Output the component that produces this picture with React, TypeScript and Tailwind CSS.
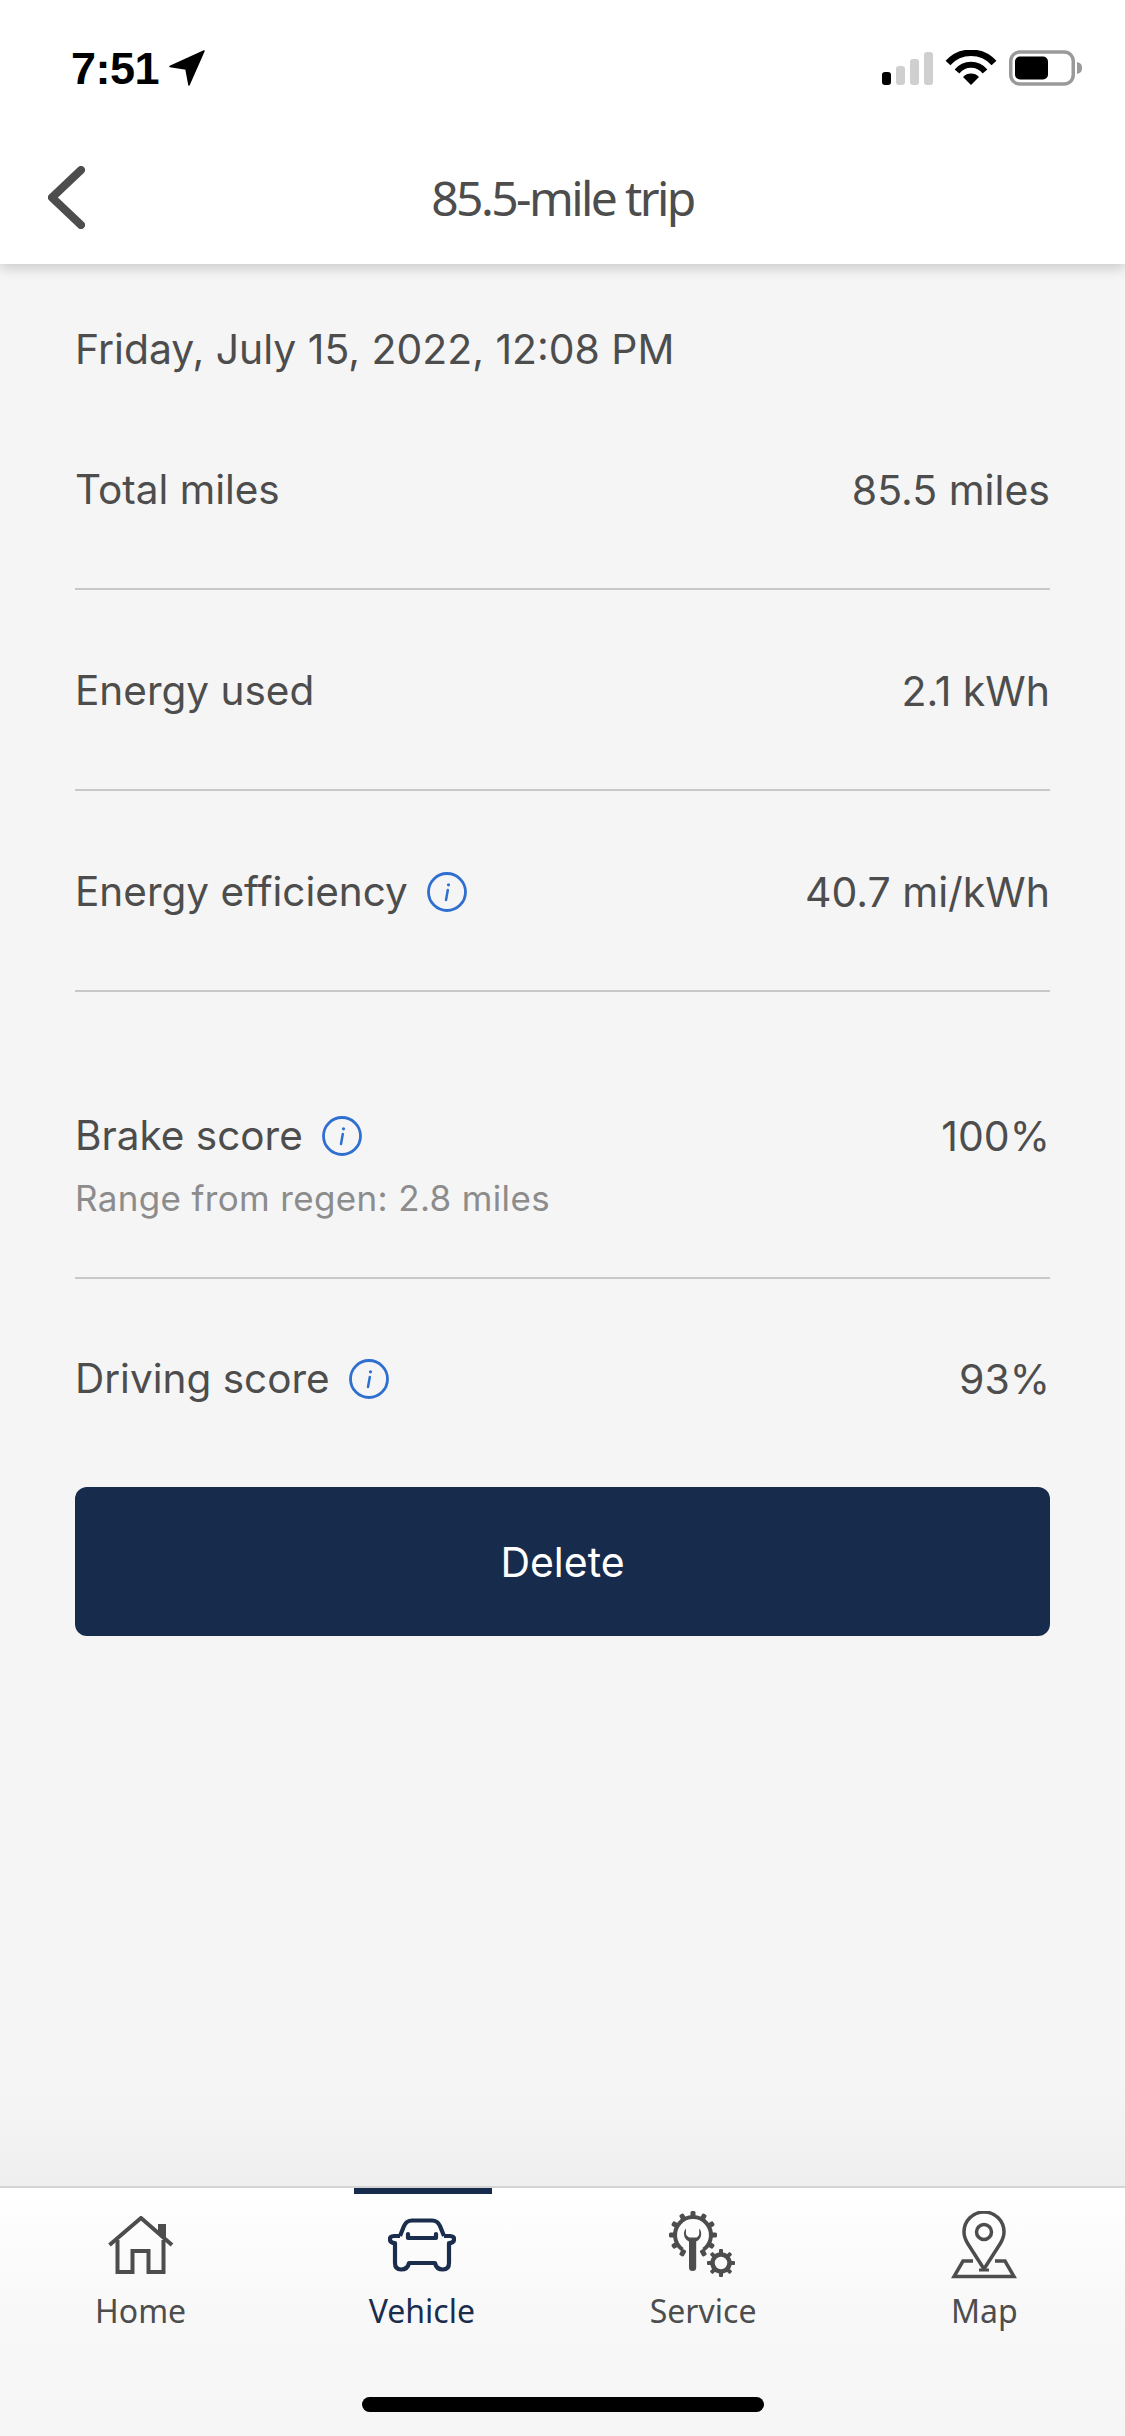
const sans = "font-['Inter','Liberation_Sans',sans-serif]";

function StatusIcons() {
  return (
    <svg width="202" height="36" viewBox="0 0 202 36" className="block">
      <rect x="0" y="22" width="9" height="13" rx="3" fill="#000" />
      <rect x="14" y="16" width="9" height="19" rx="3" fill="#cfcfcf" />
      <rect x="28" y="9" width="9" height="26" rx="3" fill="#cfcfcf" />
      <rect x="42" y="2" width="9" height="33" rx="3" fill="#cfcfcf" />
      <path d="M66 13a31 31 0 0 1 46 0" fill="none" stroke="#000" strokeWidth="6.5" />
      <path d="M75 21.500a18 18 0 0 1 28 0" fill="none" stroke="#000" strokeWidth="6" />
      <path d="M81 27a11 11 0 0 1 16 0l-8 8z" fill="#000" />
      <rect x="128.750" y="2" width="62.500" height="32" rx="9" fill="none" stroke="#9a9a9a" strokeWidth="3.500" />
      <rect x="133" y="6.500" width="33" height="23" rx="5" fill="#000" />
      <path d="M195 12c4 1 5 3 5 6s-1 5-5 6z" fill="#9a9a9a" />
    </svg>
  );
}

function InfoIcon() {
  return (
    <svg width="40" height="40" viewBox="0 0 40 40" className="block shrink-0">
      <circle cx="20" cy="20" r="18.500" fill="none" stroke="#2f6fd0" strokeWidth="2.800" />
      <path d="M20.800 18 19 28" fill="none" stroke="#2f6fd0" strokeWidth="2.500" strokeLinecap="round" />
      <circle cx="21.500" cy="12.800" r="1.600" fill="#2f6fd0" />
    </svg>
  );
}

function HomeIcon() {
  return (
    <svg width="66" height="58" viewBox="0 0 66 58" className="block">
      <path d="M1.500 29 33 2l31 27" fill="none" stroke="#4d4d4d" strokeWidth="4" />
      <path d="M50 8h8v15l-8-7z" fill="#4d4d4d" />
      <path d="M9.500 24v32h15V35h16v21h15V24" fill="none" stroke="#4d4d4d" strokeWidth="4" />
    </svg>
  );
}

function CarIcon() {
  return (
    <svg width="68" height="54" viewBox="0 0 68 54" className="block">
      <path
        d="M12 18 16 8c1.500-3.500 4-5.500 8-5.500h20c4 0 6.500 2 8 5.500l4 10M12 18H6c-3 0-4.500 1.500-4 4 .5 2.500 2 3 5 3v20c0 4 2 6.500 6 6.500s7-1.500 8-6.500h26c1 5 4 6.500 8 6.500s6-2.500 6-6.500V25c3 0 4.500-.5 5-3 .5-2.500-1-4-4-4h-6"
        fill="none"
        stroke="#1a2d4d"
        strokeWidth="4.200"
        strokeLinejoin="round"
      />
      <path d="M20 20h28M20 20v-4M48 20v-4" fill="none" stroke="#1a2d4d" strokeWidth="4.200" strokeLinecap="round" />
    </svg>
  );
}

function ServiceIcon() {
  const big = [-150, -120, -90, -60, -30, 0, 30, 60, 90, 120, 150];
  const small = [0, 45, 90, 135, 180, 225, 270, 315];
  return (
    <svg width="68" height="68" viewBox="0 0 68 68" className="block">
      <path d="M13.500 38.700A18 18 0 1 1 34.500 38.700" fill="none" stroke="#4d4d4d" strokeWidth="4" />
      {big.map((a) => (
        <rect key={a} x="21.500" y="0" width="5" height="7" rx="1.500" fill="#4d4d4d" transform={`rotate(${a} 24 24)`} />
      ))}
      <path
        d="M17 17.500C15.500 19 15 21 15 23c0 3.500 2 6 5 7.500V56.500a3.600 3.600 0 0 0 7.200 0V30.500c3-1.500 5-4 5-7.500 0-2-.5-4-2-5.500v5.500c0 1.500-2 3.500-3 3.500h-6.400c-1 0-3.800-2-3.800-3.500z"
        fill="#4d4d4d"
      />
      <circle cx="52" cy="52" r="8.500" fill="none" stroke="#4d4d4d" strokeWidth="4.500" />
      {small.map((a) => (
        <rect key={a} x="50" y="38" width="4" height="6" rx="1" fill="#4d4d4d" transform={`rotate(${a} 52 52)`} />
      ))}
    </svg>
  );
}

function MapIcon() {
  return (
    <svg width="66" height="68" viewBox="0 0 66 68" className="block">
      <path
        d="M33 58 17 33c-2.500-4-4-7.500-4-12a20 20 0 0 1 40 0c0 4.500-1.500 8-4 12z"
        fill="none"
        stroke="#4d4d4d"
        strokeWidth="3.500"
        strokeLinejoin="round"
      />
      <circle cx="33" cy="21" r="7.500" fill="none" stroke="#4d4d4d" strokeWidth="3.500" />
      <path d="M22 50H12L3 65.500h60L54 50H44" fill="none" stroke="#4d4d4d" strokeWidth="3.500" />
      <path d="M28 59h10" stroke="#4d4d4d" strokeWidth="3" />
    </svg>
  );
}

function Row({ label, value, info, sub }: { label: string; value: string; info?: boolean; sub?: string }) {
  return (
    <div className="flex items-start justify-between">
      <div>
        <div className="flex h-[40px] items-center gap-[19px]">
          <span>{label}</span>
          {info && <InfoIcon />}
        </div>
        {sub && <div className="mt-[22px] h-[40px] text-[35px] leading-[40px] tracking-[0.35px] text-[#8c8c8c]">{sub}</div>}
      </div>
      <span className="h-[40px] text-[41px]">{value}</span>
    </div>
  );
}

const tabs = [
  { label: "Home", icon: <HomeIcon />, active: false, pad: "pt-[28px]", h: "h-[77px]" },
  { label: "Vehicle", icon: <CarIcon />, active: true, pad: "pt-[30px]", h: "h-[75px]" },
  { label: "Service", icon: <ServiceIcon />, active: false, pad: "pt-[23px]", h: "h-[82px]" },
  { label: "Map", icon: <MapIcon />, active: false, pad: "pt-[23px]", h: "h-[82px]" },
];

export default function App() {
  return (
    <div className={`flex h-[2436px] w-[1125px] flex-col overflow-hidden bg-[#f5f5f5] text-[#4d4d4d] ${sans}`}>
      <header className="relative z-10 h-[264px] shrink-0 bg-white shadow-[0_4px_12px_rgba(0,0,0,0.18)]">
        <div className="flex h-[136px] items-center justify-between pl-[71px] pr-[41px]">
          <div className="flex items-center gap-[10px] text-black">
            <span className="font-['Liberation_Sans',sans-serif] text-[45px] font-bold leading-none tracking-[-0.5px]">7:51</span>
            <svg width="36" height="36" viewBox="0 0 36 36" className="block">
              <path d="M35 1 1 16.500l16 2.500 3 16z" fill="#000" stroke="#000" strokeWidth="1.500" strokeLinejoin="round" />
            </svg>
          </div>
          <StatusIcons />
        </div>
        <div className="relative flex h-[124px] items-center justify-center">
          <svg width="37" height="63" viewBox="0 0 37 63" className="absolute left-[48px] top-[30px] block">
            <path d="M33 4 4 31.500 33 59" fill="none" stroke="#4d4d4d" strokeWidth="8" strokeLinecap="round" strokeLinejoin="round" />
          </svg>
          <h1 className="font-['Noto_Sans',sans-serif] text-[48px] font-normal leading-none tracking-[-2.6px] text-[#4d4d4d]">85.5-mile trip</h1>
        </div>
      </header>

      <main className="flex flex-1 flex-col bg-gradient-to-b from-[#f5f5f5] from-95% to-[#efefef] px-[75px] text-[40.5px] leading-[40px]">
        <div className="pt-[65px] text-[40.9px]">Friday, July 15, 2022, 12:08 PM</div>
        <div className="mt-[101px] h-[118px]">
          <Row label="Total miles" value="85.5 miles" />
        </div>
        <div className="h-[2px] bg-[#c8c8c8]" />
        <div className="mt-[81px] h-[118px]">
          <Row label="Energy used" value="2.1 kWh" />
        </div>
        <div className="h-[2px] bg-[#c8c8c8]" />
        <div className="mt-[81px] h-[118px]">
          <Row label="Energy efficiency" value="40.7 mi/kWh" info />
        </div>
        <div className="h-[2px] bg-[#c8c8c8]" />
        <div className="mt-[124px] h-[161px]">
          <Row label="Brake score" value="100%" info sub="Range from regen: 2.8 miles" />
        </div>
        <div className="h-[2px] bg-[#c8c8c8]" />
        <div className="mt-[80px] h-[128px]">
          <Row label="Driving score" value="93%" info />
        </div>
        <button className="flex h-[149px] w-full items-center justify-center rounded-[12px] bg-[#172b4d] text-[41px] text-white">
          Delete
        </button>
      </main>

      <nav className="relative h-[250px] shrink-0 border-t-2 border-[#d4d4d4] bg-gradient-to-b from-white via-[#f8f8f8] to-[#f6f6f6]">
        <div className="grid grid-cols-4">
          {tabs.map((t) => (
            <div key={t.label} className={`relative flex flex-col items-center ${t.pad}`}>
              {t.active && <div className="absolute left-[73px] top-0 h-[6px] w-[138px] bg-[#172b4d]" />}
              <div className={`flex items-start ${t.h}`}>{t.icon}</div>
              <span className={`font-['Noto_Sans',sans-serif] text-[32px] leading-[36px] ${t.active ? "text-[#1a2d4d]" : "text-[#4d4d4d]"}`}>
                {t.label}
              </span>
            </div>
          ))}
        </div>
        <div className="absolute bottom-[24px] left-[362px] h-[15px] w-[402px] rounded-full bg-black" />
      </nav>
    </div>
  );
}
